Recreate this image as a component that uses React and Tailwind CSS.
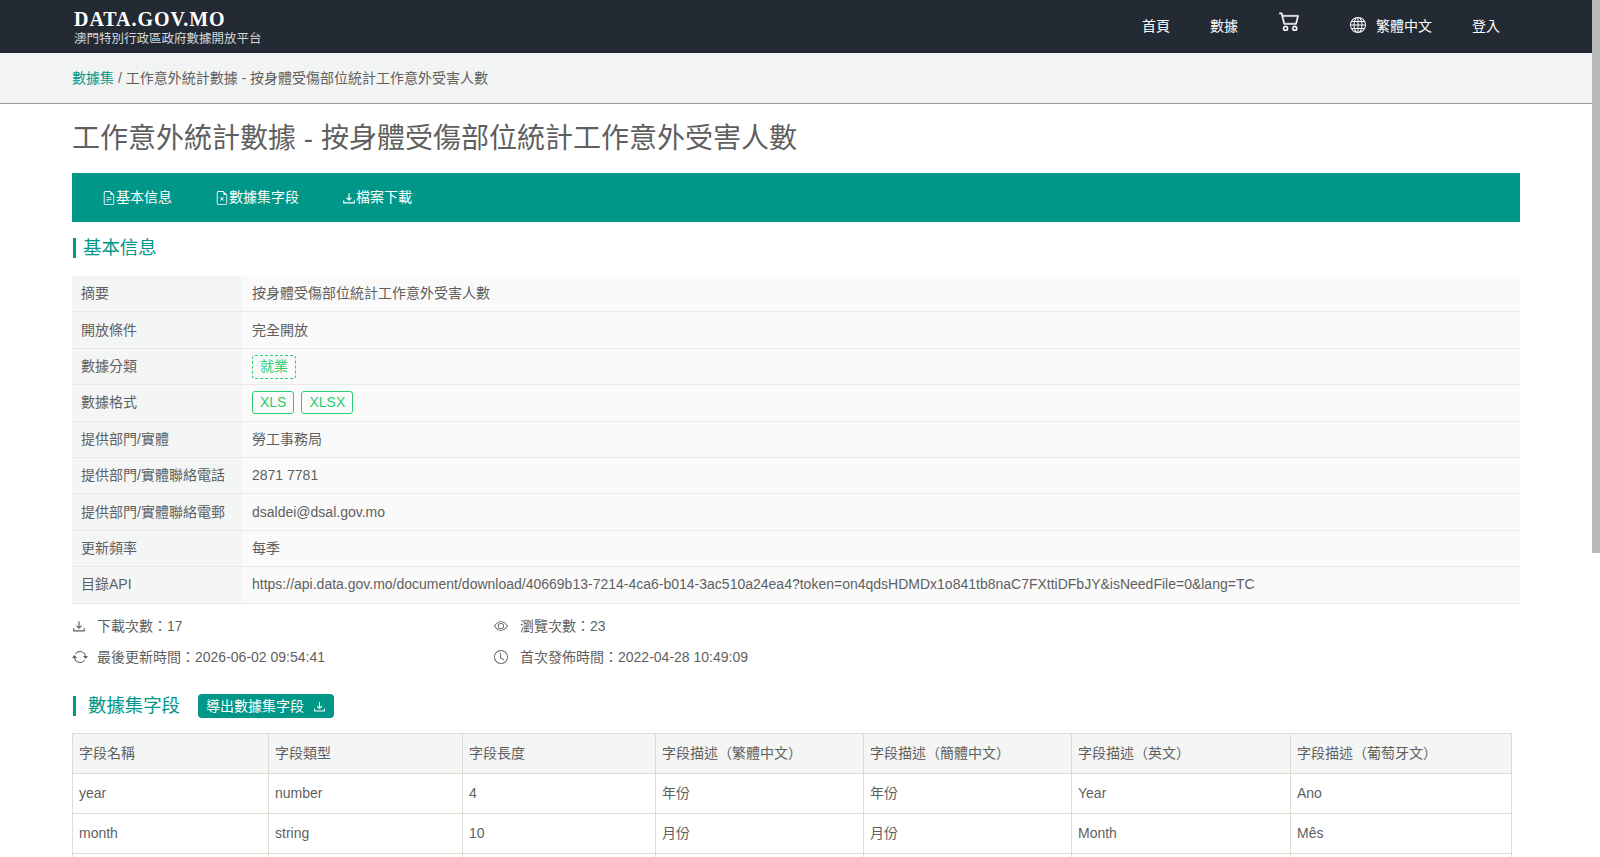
import React from "react";
import { BsFileEarmarkText, BsFileEarmarkX, BsCart2, BsGlobe, BsEye, BsClock, BsArrowRepeat } from "react-icons/bs";

const font = "font-['Liberation_Sans','Noto_Sans_CJK_TC',sans-serif]";

const rows = [
  ["摘要", "按身體受傷部位統計工作意外受害人數", "h-[36px]"],
  ["開放條件", "完全開放", "h-[37px]"],
  ["數據分類", "cat", "h-[36px]"],
  ["數據格式", "fmt", "h-[37px] pb-[1px]"],
  ["提供部門/實體", "勞工事務局", "h-[36px]"],
  ["提供部門/實體聯絡電話", "2871 7781", "h-[36px]"],
  ["提供部門/實體聯絡電郵", "dsaldei@dsal.gov.mo", "h-[37px]"],
  ["更新頻率", "每季", "h-[36px]"],
  ["目錄API", "https://api.data.gov.mo/document/download/40669b13-7214-4ca6-b014-3ac510a24ea4?token=on4qdsHDMDx1o841tb8naC7FXttiDFbJY&isNeedFile=0&lang=TC", "h-[37px] pb-[1px]"],
];

const cols = [
  ["字段名稱", "w-[196px]"],
  ["字段類型", "w-[194px]"],
  ["字段長度", "w-[193px]"],
  ["字段描述（繁體中文）", "w-[208px]"],
  ["字段描述（簡體中文）", "w-[208px]"],
  ["字段描述（英文）", "w-[219px]"],
  ["字段描述（葡萄牙文）", "w-[221px]"],
];

const data = [
  ["year", "number", "4", "年份", "年份", "Year", "Ano"],
  ["month", "string", "10", "月份", "月份", "Month", "Mês"],
  ["", "", "", "", "", "", ""],
];

function DownIcon({ className }) {
  return (
    <svg viewBox="0 0 16 16" fill="none" stroke="currentColor" strokeWidth="1.3" className={className}>
      <path d="M8 2.5v7.5M5.2 7.6 8 10.4l2.8-2.8M2 10.5v3h12v-3" />
    </svg>
  );
}

function Value({ v }) {
  if (v === "cat")
    return <span className="inline-flex h-[24px] items-center rounded-[3px] border border-dashed border-[#2ecc71] px-[7px] text-[#2ecc71]">就業</span>;
  if (v === "fmt")
    return (
      <span className="flex gap-[7px]">
        <span className="inline-flex h-[23px] items-center rounded-[3px] border border-[#2ecc71] px-[7px] text-[#2ecc71]">XLS</span>
        <span className="inline-flex h-[23px] items-center rounded-[3px] border border-[#2ecc71] px-[7px] text-[#2ecc71]">XLSX</span>
      </span>
    );
  return <span>{v}</span>;
}

export default function App() {
  return (
    <div className={`flex h-[857px] w-[1600px] overflow-hidden bg-white text-[14px] text-[#5f5f5f] [text-spacing-trim:space-all] ${font}`}>
      <div className="w-[1592px] shrink-0">
        <header className="flex h-[53px] items-center justify-between bg-[#232a33] pl-[74px] pr-[92px]">
          <div className="pt-[2px]">
            <div className="font-['Liberation_Serif',serif] text-[20px] font-bold leading-[21px] tracking-[0.95px] text-white">DATA.GOV.MO</div>
            <div className="mt-[1px] text-[12.5px] leading-[16px] text-[#d5d7d9]">澳門特別行政區政府數據開放平台</div>
          </div>
          <nav className="flex items-center pb-[1px] text-white">
            <span>首頁</span>
            <span className="ml-[40px]">數據</span>
            <BsCart2 className="mb-[12px] ml-[41px] stroke-[0.3] text-[21px]" />
            <BsGlobe className="mb-[2px] ml-[50px] text-[16px]" />
            <span className="ml-[10px]">繁體中文</span>
            <span className="ml-[40px]">登入</span>
          </nav>
        </header>

        <div className="flex h-[51px] items-center border-b border-[#999] bg-[#f2f4f4] px-[72px] pt-[1px]">
          <span className="text-[#009688]">數據集</span>
          <span>&nbsp;/ 工作意外統計數據 - 按身體受傷部位統計工作意外受害人數</span>
        </div>

        <div className="px-[72px]">
          <h1 className="mt-[16px] text-[28px] font-normal leading-[38px]">工作意外統計數據 - 按身體受傷部位統計工作意外受害人數</h1>

          <div className="mt-[15px] flex h-[49px] w-[1448px] items-center bg-[#009688] pl-[30px] text-white">
            <span className="flex items-center"><BsFileEarmarkText className="text-[14px]" />基本信息</span>
            <span className="ml-[43px] flex items-center"><BsFileEarmarkX className="text-[14px]" />數據集字段</span>
            <span className="ml-[43px] flex items-center"><DownIcon className="h-[14px] w-[14px]" />檔案下載</span>
          </div>

          <h2 className="ml-[1px] mt-[16px] flex h-[20px] items-center border-l-[3px] border-[#009688] pl-[7px] text-[18.4px] font-normal text-[#009688]">基本信息</h2>

          <div className="mt-[18px] w-[1448px]">
            {rows.map(([k, v, h]) => (
              <div key={k} className={`flex ${h} border-b border-[#e8e8e8] bg-[#fafafa]`}>
                <div className="flex w-[170px] items-center bg-[#f4f6f6] pl-[9px]">{k}</div>
                <div className="flex flex-1 items-center pl-[10px]">
                  <Value v={v} />
                </div>
              </div>
            ))}
          </div>

          <div className="mt-[13px] grid grid-cols-[422px_1fr] gap-y-[13px] leading-[18px]">
            <div className="flex items-center"><DownIcon className="mr-[11px] h-[14px] w-[14px]" />下載次數：17</div>
            <div className="flex items-center"><BsEye className="mr-[12px] text-[14px]" />瀏覽次數：23</div>
            <div className="flex items-center"><BsArrowRepeat className="mr-[9px] text-[16px]" />最後更新時間：2026-06-02 09:54:41</div>
            <div className="flex items-center"><BsClock className="mr-[12px] text-[14px]" />首次發佈時間：2022-04-28 10:49:09</div>
          </div>

          <div className="mt-[28px] flex items-center">
            <h2 className="ml-[1px] flex h-[20px] items-center border-l-[3px] border-[#009688] pl-[12px] text-[18.4px] font-normal text-[#009688]">數據集字段</h2>
            <button className="ml-[18px] flex h-[24px] items-center rounded-[4px] bg-[#009688] px-[8px] text-white">
              導出數據集字段
              <DownIcon className="ml-[9px] h-[13px] w-[13px]" />
            </button>
          </div>

          <table className="mt-[15px] w-[1440px] table-fixed border-collapse border border-[#ddddd0]">
            <thead>
              <tr className="h-[40px] bg-[#f4f6f6]">
                {cols.map(([c, w]) => (
                  <th key={c} className={`${w} border border-[#ddddd0] px-[6px] text-left font-normal`}>{c}</th>
                ))}
              </tr>
            </thead>
            <tbody>
              {data.map((r, n) => (
                <tr key={n} className="h-[40px]">
                  {r.map((c, i) => (
                    <td key={i} className="border border-[#ddddd0] px-[6px]">{c}</td>
                  ))}
                </tr>
              ))}
            </tbody>
          </table>
        </div>
      </div>
      <div className="w-[8px] shrink-0 bg-white">
        <div className="h-[553px] bg-[#b9b9b9]" />
      </div>
    </div>
  );
}
